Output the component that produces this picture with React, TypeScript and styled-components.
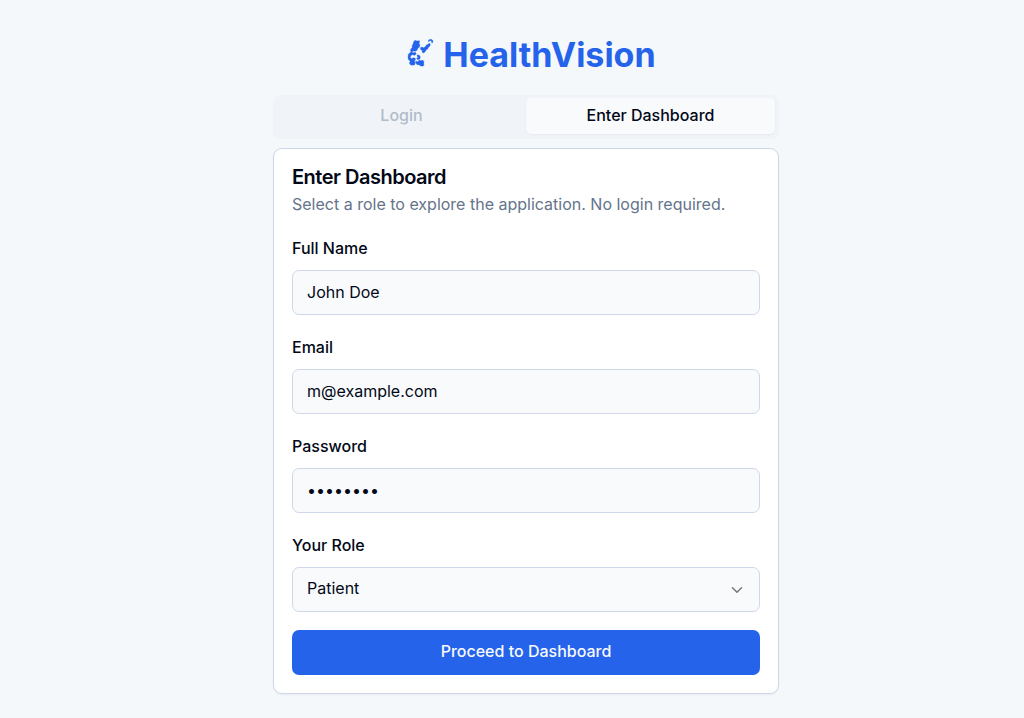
import React from 'react';
import styled, { createGlobalStyle } from 'styled-components';
import { ChevronDown } from 'lucide-react';

const GlobalStyle = createGlobalStyle`
  *, *::before, *::after { box-sizing: border-box; }
  body {
    margin: 0;
    background: #f4f8fb;
    color: #020817;
    font-family: Inter, "Liberation Sans", sans-serif;
    font-size: 16px;
    line-height: 24px;
  }
  button, input, select { font: inherit; color: inherit; }
`;

const Page = styled.main`
  display: flex;
  flex-direction: column;
  align-items: center;
  min-height: 100vh;
  padding: 34px 0 24px 28px;
`;

const Brand = styled.header`
  display: flex;
  align-items: center;
  gap: 9px;
  margin-bottom: 20px;
  padding-left: 2px;
  color: #2563eb;
`;

const BrandName = styled.h1`
  margin: 0;
  font-size: 34px;
  line-height: 41px;
  font-weight: 700;
`;

const Panel = styled.div`
  width: 100%;
  max-width: 506px;
`;

const TabList = styled.div`
  display: grid;
  grid-template-columns: 1fr 1fr;
  height: 44px;
  padding: 3px 4px 5px;
  margin-bottom: 9px;
  border-radius: 7px;
  background: #f0f4f8;
`;

const Tab = styled.button<{ $active?: boolean }>`
  height: 36px;
  padding: 0 14px 2px;
  border: 0;
  border-radius: 5px;
  font-weight: 500;
  color: ${(p) => (p.$active ? '#020817' : '#b1bcca')};
  background: ${(p) => (p.$active ? '#f9fafc' : 'transparent')};
  box-shadow: ${(p) => (p.$active ? '0 1px 2px rgba(0, 0, 0, 0.05)' : 'none')};
`;

const Card = styled.section`
  padding: 18px;
  border: 1px solid #cfd8e8;
  border-radius: 9px;
  background: #ffffff;
  box-shadow: 0 1px 2px rgba(0, 0, 0, 0.05);
`;

const CardTitle = styled.h2`
  margin: 0 0 5px;
  font-size: 20px;
  line-height: 20px;
  font-weight: 600;
  letter-spacing: -0.025em;
`;

const CardDescription = styled.p`
  margin: 0 0 20px;
  color: #64748b;
`;

const Form = styled.form`
  display: flex;
  flex-direction: column;
  gap: 18px;
`;

const Field = styled.div`
  display: flex;
  flex-direction: column;
  gap: 9px;

  & + & { padding-top: 2px; }
`;

const Label = styled.label`
  line-height: 25px;
  font-weight: 500;
`;

const Input = styled.input`
  width: 100%;
  height: 45px;
  padding: 0 14px 2px;
  border: 1px solid #cfd8e8;
  border-radius: 7px;
  background: #f9fafc;
`;

const SelectBox = styled.div`
  display: grid;
  align-items: center;

  > * { grid-area: 1 / 1; }

  > svg {
    justify-self: end;
    margin-right: 14px;
    color: #74777e;
    pointer-events: none;
  }
`;

const Select = styled.select`
  appearance: none;
  width: 100%;
  height: 45px;
  padding: 0 40px 3px 14px;
  border: 1px solid #cfd8e8;
  border-radius: 7px;
  background: #f9fafc;
`;

const Submit = styled.button`
  height: 45px;
  padding: 0 18px 3px;
  border: 0;
  border-radius: 7px;
  background: #2563eb;
  color: #f8fafc;
  font-weight: 500;
`;

const Logo = () => (
  <svg width="36" height="36" viewBox="-3 20 108 108" fill="currentColor" stroke="currentColor" strokeWidth="1" strokeLinejoin="round" aria-hidden="true">
    <path d="M44 34 L48 30 L54 32 L61 31 L62 35 L60 39 L63 44 L61 50 L57 54 L54 60 L49 63 L44 62 L38 65 L34 62 L36 55 L40 51 L39 46 L42 42 Z" />
    <path d="M64 52 L69 50 L74 52 L79 49 L82 44 L87 42 L90 39 L94 41 L93 47 L89 50 L86 56 L81 59 L78 65 L73 68 L69 65 L70 60 L65 58 Z" />
    <path d="M87 32 L90 28 L97 27 L102 31 L101 37 L98 37 L97 31 L92 31 L89 34 Z" />
    <path d="M36 64 L42 67 L49 66 L52 71 L47 75 L40 73 L35 76 L34 82 L38 85 L43 82 L49 84 L49 89 L46 92 L49 97 L47 103 L41 105 L34 103 L31 98 L34 92 L29 89 L27 82 L28 72 Z" />
    <path d="M54 74 L60 74 L64 79 L63 85 L58 88 L53 86 L56 81 Z" />
    <path d="M50 92 L56 94 L61 89 L66 91 L71 89 L75 94 L74 99 L75 105 L70 108 L63 106 L60 103 L54 103 L51 99 Z" />
  </svg>
);

export default function App() {
  return (
    <>
      <GlobalStyle />
      <Page>
        <Brand>
          <Logo />
          <BrandName>HealthVision</BrandName>
        </Brand>
        <Panel>
          <TabList role="tablist">
            <Tab type="button" role="tab" aria-selected={false}>Login</Tab>
            <Tab type="button" role="tab" aria-selected $active>Enter Dashboard</Tab>
          </TabList>
          <Card>
            <CardTitle>Enter Dashboard</CardTitle>
            <CardDescription>Select a role to explore the application. No login required.</CardDescription>
            <Form onSubmit={(e) => e.preventDefault()}>
              <Field>
                <Label htmlFor="name">Full Name</Label>
                <Input id="name" type="text" defaultValue="John Doe" />
              </Field>
              <Field>
                <Label htmlFor="email">Email</Label>
                <Input id="email" type="email" defaultValue="m@example.com" />
              </Field>
              <Field>
                <Label htmlFor="password">Password</Label>
                <Input id="password" type="password" defaultValue="password" />
              </Field>
              <Field>
                <Label htmlFor="role">Your Role</Label>
                <SelectBox>
                  <Select id="role" defaultValue="patient">
                    <option value="patient">Patient</option>
                    <option value="doctor">Doctor</option>
                  </Select>
                  <ChevronDown size={18} />
                </SelectBox>
              </Field>
              <Submit type="submit">Proceed to Dashboard</Submit>
            </Form>
          </Card>
        </Panel>
      </Page>
    </>
  );
}
